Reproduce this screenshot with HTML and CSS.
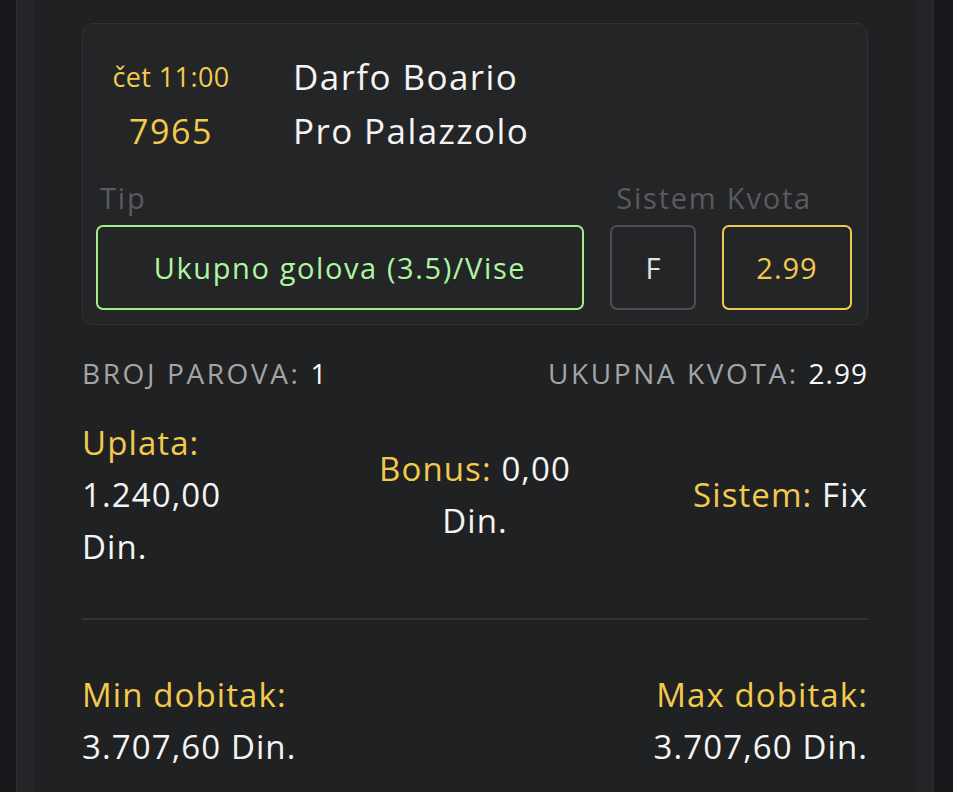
FILE: index.html
```html
<!DOCTYPE html>
<html lang="sr">
<head>
  <meta charset="utf-8">
  <title>Tiket</title>
  <link rel="stylesheet" href="styles.css">
</head>
<body>
<div class="frame">
<div class="sheet">

  <div class="pair">
    <div class="match">
      <div class="when">
        <div class="time">čet 11:00</div>
        <div class="code">7965</div>
      </div>
      <div class="teams">
        <div>Darfo Boario</div>
        <div>Pro Palazzolo</div>
      </div>
    </div>

    <div class="labels">
      <span>Tip</span>
      <span class="labels-right">Sistem Kvota</span>
    </div>

    <div class="picks">
      <div class="box tip">Ukupno golova (3.5)/Vise</div>
      <div class="box sys">F</div>
      <div class="box odd">2.99</div>
    </div>
  </div>

  <div class="count">
    <div>BROJ PAROVA: <b>1</b></div>
    <div>UKUPNA KVOTA: <b>2.99</b></div>
  </div>

  <div class="sums">
    <div class="col left"><span class="y">Uplata:</span> 1.240,00 Din.</div>
    <div class="col mid"><div class="mid-in"><span class="y">Bonus:</span> 0,00 Din.</div></div>
    <div class="col right"><span class="y">Sistem:</span> Fix</div>
  </div>

  <hr class="line">

  <div class="win">
    <div>
      <div class="y">Min dobitak:</div>
      <div>3.707,60 Din.</div>
    </div>
    <div class="right">
      <div class="y">Max dobitak:</div>
      <div>3.707,60 Din.</div>
    </div>
  </div>

</div>
</div>
</body>
</html>
```

FILE: styles.css
```css
body{margin:0; background:#16181b; font-family:"Open Sans", "DejaVu Sans", sans-serif; color:#f4f4f4;}

.frame{margin:0 19px 0 16px; min-height:792px; background:#242528; border-left:1px solid #2c2e31; border-right:1px solid #2c2e31; padding:0 17px; box-sizing:border-box;}

.sheet{background:#202123; min-height:792px; padding:23px 48px 0 48px;}

/* match card */
.pair{background:#242527; border:1px solid #303235; border-radius:11px; padding:26px 13px 14px 13px;}

.match{display:flex; gap:47px;}
.when{width:150px; text-align:center; color:#f3ca4e;}
.time{font-size:27px; line-height:54px; letter-spacing:0.4px;}
.code{font-size:34px; line-height:54px; letter-spacing:1.6px;}
.teams{font-size:35px; line-height:54px; letter-spacing:1.4px;}

.labels{display:flex; justify-content:space-between; color:#595b5e; font-size:29px; line-height:40px; letter-spacing:1.8px; margin-top:20px; padding-left:4px;}
.labels-right{margin-right:42px;}

.picks{display:flex; gap:26px; margin-top:7px;}
.box{height:85px; box-sizing:border-box; border:2px solid; border-radius:7px; display:flex; align-items:center; justify-content:center; font-size:29px;}
.tip{width:488px; border-color:#a3ec8c; color:#aef6a0; letter-spacing:1.6px;}
.sys{width:86px; border-color:#4d4e51; color:#e2e2e2;}
.odd{width:130px; border-color:#f1c94c; color:#f3ca4e; letter-spacing:1px;}

/* totals */
.count{display:flex; justify-content:space-between; margin-top:28px; font-size:28px; line-height:40px; color:#a4a4a4; letter-spacing:2.6px;}
.count b{font-weight:normal; color:#fafafa; letter-spacing:1px;}

.sums{display:grid; grid-template-columns:190px 1fr 190px; align-items:center; margin-top:24px; font-size:33px; line-height:52px; letter-spacing:1.1px;}
.mid{text-align:center;}
.mid-in{max-width:250px; margin:0 auto;}
.right{text-align:right;}

.y{color:#f3ca4e;}

.line{border:0; height:2px; background:#313335; margin:45px 0 0 0;}

.win{display:flex; justify-content:space-between; margin-top:49px; font-size:33px; line-height:52px; letter-spacing:1.1px;}
```
